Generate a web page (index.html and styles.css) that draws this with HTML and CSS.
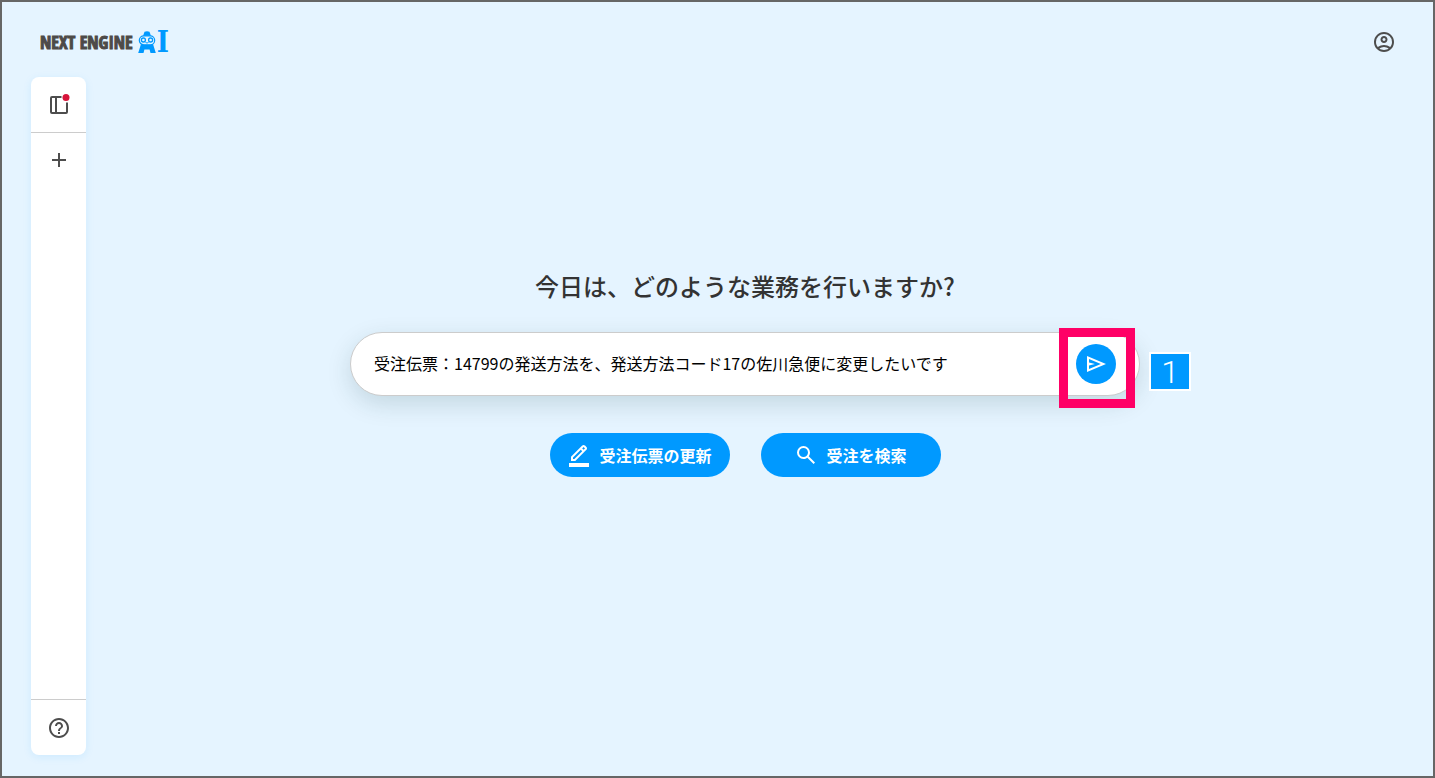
FILE: index.html
```html
<!DOCTYPE html>
<html lang="ja">

<head>
  <meta charset="UTF-8">
  <meta name="viewport" content="width=device-width, initial-scale=1.0">
  <title>NEXT ENGINE AI</title>
  <link rel="stylesheet" href="styles.css">
</head>

<body>
  <header class="header">
    <a class="logo" href="#">
      <span class="logo-name">NEXT ENGINE</span>
      <svg class="logo-robot" viewBox="0 0 18 22" aria-hidden="true">
        <path fill="#0099ff" d="M5 5L6.500 .8Q9 -.4 11.500 .8L13 5z" />
        <path fill="#0099ff" d="M3 13h12L17.800 22h-5.300l-.9-3.500H6.400L5.500 22H.2z" />
        <rect x="1.300" y="4.800" width="15.400" height="9" rx="4.500" fill="#e5f4ff" stroke="#0099ff" stroke-width="1.200" />
        <circle cx="5.400" cy="9" r="2" fill="none" stroke="#0099ff" stroke-width="1.300" />
        <circle cx="12.600" cy="9" r="2" fill="none" stroke="#0099ff" stroke-width="1.300" />
        <path fill="none" stroke="#0099ff" d="M7.500 11.500q1.500 1 3 0" />
      </svg>
      <span class="logo-letter">I</span>
    </a>
    <button class="icon-button" type="button" aria-label="アカウント">
      <svg viewBox="0 0 24 24" width="24" height="24">
        <path d="M5.850 17.100q1.275-.975 2.850-1.538T12 15q1.725 0 3.300.563t2.850 1.537q.875-1.025 1.363-2.325T20 12q0-3.325-2.338-5.663T12 4 6.337 6.337 4 12q0 1.475.488 2.775T5.850 17.100M12 13q-1.475 0-2.488-1.012T8.500 9.500t1.012-2.488T12 6t2.488 1.012T15.500 9.500t-1.012 2.488T12 13m0 9q-2.075 0-3.900-.788t-3.175-2.137T2.788 15.900 2 12t.788-3.900 2.137-3.175T8.100 2.788 12 2t3.900.788 3.175 2.137T21.213 8.100 22 12t-.788 3.900-2.137 3.175-3.175 2.138T12 22m0-2q1.325 0 2.500-.387t2.150-1.113q-.975-.725-2.150-1.112T12 17t-2.500.388T7.350 18.500q.975.725 2.150 1.113T12 20m0-9q.65 0 1.075-.425T13.500 9.500t-.425-1.075T12 8t-1.075.425T10.500 9.500t.425 1.075T12 11" />
      </svg>
    </button>
  </header>

  <div class="layout">
    <nav class="sidebar">
      <div class="sidebar-item">
        <button class="icon-button" type="button" aria-label="サイドバーを開く">
          <svg class="icon-panel" viewBox="0 0 24 24" width="24" height="24">
            <path d="M14.500 4H5a1 1 0 0 0-1 1v14a1 1 0 0 0 1 1h14a1 1 0 0 0 1-1V9.500M9 4v16" />
            <circle cx="19" cy="4.500" r="3.500" />
          </svg>
        </button>
      </div>
      <div class="sidebar-item sidebar-new">
        <button class="icon-button" type="button" aria-label="新しいチャット">
          <svg viewBox="0 0 24 24" width="24" height="24">
            <path d="M11 13H5v-2h6V5h2v6h6v2h-6v6h-2z" />
          </svg>
        </button>
      </div>
      <div class="sidebar-item">
        <button class="icon-button" type="button" aria-label="ヘルプ">
          <svg viewBox="0 0 24 24" width="24" height="24">
            <path d="M11 18h2v-2h-2zm1-16C6.480 2 2 6.480 2 12s4.480 10 10 10 10-4.480 10-10S17.520 2 12 2m0 18c-4.410 0-8-3.590-8-8s3.590-8 8-8 8 3.590 8 8-3.590 8-8 8m0-14c-2.210 0-4 1.790-4 4h2c0-1.100.9-2 2-2s2 .9 2 2c0 2-3 1.750-3 5h2c0-2.250 3-2.500 3-5 0-2.210-1.790-4-4-4" />
          </svg>
        </button>
      </div>
    </nav>

    <main class="main">
      <h1 class="title">今日は、どのような業務を行いますか?</h1>

      <form class="chat-form">
        <input class="chat-input" type="text" aria-label="メッセージ" value="受注伝票：14799の発送方法を、発送方法コード17の佐川急便に変更したいです">
        <div class="send">
          <button class="send-button" type="button" aria-label="送信">
            <svg viewBox="0 0 24 24" width="24" height="24">
              <path d="M3 20V4l19 8zm2-3 11.850-5L5 7v3.500l6 1.500-6 1.500z" />
            </svg>
          </button>
          <!-- 手順の強調枠と番号 -->
          <div class="highlight"></div>
          <div class="step">1</div>
        </div>
      </form>

      <div class="actions">
        <button class="action" type="button">
          <svg viewBox="0 0 24 24" width="24" height="24">
            <path d="M2 24v-4h20v4zm2-6v-4.250L15.200 2.575q.275-.275.638-.425T16.600 2t.775.150.675.450L19.425 4q.3.275.438.650T20 5.425q0 .375-.137.738t-.438.662L8.250 18zm2-2h1.400l7.800-7.775-1.400-1.425L6 14.600zM16.600 6.800 18 5.425 16.575 4 15.200 5.400z" />
          </svg>
          受注伝票の更新
        </button>
        <button class="action" type="button">
          <svg viewBox="0 0 24 24" width="24" height="24">
            <path d="m19.600 21-6.300-6.300q-.75.6-1.725.95T9.500 16q-2.725 0-4.612-1.888T3 9.500t1.888-4.612T9.500 3t4.613 1.888T16 9.500q0 1.100-.35 2.075T14.700 13.300l6.300 6.300zM9.500 14q1.875 0 3.188-1.312T14 9.500t-1.312-3.187T9.500 5 6.313 6.313 5 9.500t1.313 3.188T9.500 14" />
          </svg>
          受注を検索
        </button>
      </div>
    </main>
  </div>
</body>

</html>
```
FILE: styles.css
```css
* {
  box-sizing: border-box;
}

body {
  display: flex;
  flex-direction: column;
  min-height: 100vh;
  margin: 0;
  border: 2px solid #666;
  background-color: #e5f4ff;
  color: #333;
  font-family: "Noto Sans CJK JP", sans-serif;
}

button {
  border: none;
  padding: 0;
  font-family: inherit;
  cursor: pointer;
}

svg {
  display: block;
  fill: currentColor;
}

.header {
  display: flex;
  align-items: center;
  justify-content: space-between;
  height: 75px;
  padding: 4px 37px 0 38px;
}

.logo {
  display: flex;
  align-items: center;
  height: 24px;
  color: #4d4a48;
  text-decoration: none;
}

.logo-name {
  margin-right: 5px;
  font-family: "Liberation Sans Narrow", "Open Sans Condensed", "Liberation Sans", sans-serif;
  font-size: 18px;
  font-weight: bold;
  -webkit-text-stroke: 1px #4d4a48;
}

.logo-robot {
  width: 18px;
  height: 22px;
}

.logo-letter {
  margin-left: 1px;
  color: #09f;
  font-family: "DejaVu Serif Condensed", "DejaVu Serif", serif;
  font-size: 29px;
  font-weight: bold;
  line-height: 22px;
}

.icon-button {
  background: none;
  color: #4d4d4d;
}

.icon-panel path {
  fill: none;
  stroke: #4d4d4d;
  stroke-width: 2px;
}

.icon-panel circle {
  fill: #d7143a;
}

.layout {
  display: flex;
  flex: 1;
  padding: 0 29px 21px;
}

.sidebar {
  display: flex;
  flex-direction: column;
  width: 55px;
  border-radius: 8px;
  background-color: #fff;
  box-shadow: 0 2px 8px rgba(0, 153, 255, 0.1);
}

.sidebar-item {
  display: flex;
  align-items: center;
  justify-content: center;
  height: 55px;
}

.sidebar-new {
  flex: 1;
  align-items: flex-start;
  padding-top: 15px;
  border-top: 1px solid #ccc;
  border-bottom: 1px solid #ccc;
}

.main {
  display: flex;
  flex: 1;
  flex-direction: column;
  align-items: center;
  justify-content: center;
  padding-bottom: 88px;
}

.title {
  margin: 0 0 28px;
  font-size: 24px;
  font-weight: 500;
  line-height: 36px;
}

.chat-form {
  display: flex;
  align-items: center;
  width: 100%;
  max-width: 790px;
  height: 64px;
  margin-bottom: 37px;
  padding: 0 23px;
  border: 1px solid #ccc;
  border-radius: 32px;
  background-color: #fff;
  box-shadow: 0 8px 24px rgba(0, 51, 51, 0.15);
}

.chat-input {
  flex: 1;
  min-width: 0;
  padding: 0 0 2px;
  border: none;
  outline: none;
  background: none;
  color: #000;
  font-family: inherit;
  font-size: 16px;
}

.send {
  position: relative;
}

.send-button {
  display: flex;
  align-items: center;
  justify-content: center;
  width: 40px;
  height: 40px;
  border-radius: 50%;
  background-color: #09f;
  color: #fff;
}

.highlight {
  position: absolute;
  top: -16px;
  left: -17px;
  width: 76px;
  height: 80px;
  border: 9px solid #f06;
  pointer-events: none;
}

.step {
  position: absolute;
  top: 8px;
  left: 73px;
  width: 42px;
  height: 39px;
  border: 2px solid #fff;
  background-color: #09f;
  color: #fff;
  font-family: Roboto, sans-serif;
  font-size: 32px;
  font-weight: 300;
  line-height: 36px;
  text-align: center;
}

.actions {
  display: flex;
  gap: 31px;
}

.action {
  display: flex;
  align-items: center;
  justify-content: center;
  gap: 8px;
  width: 180px;
  height: 44px;
  border-radius: 22px;
  background-color: #09f;
  color: #fff;
  font-size: 16px;
  font-weight: bold;
  line-height: 24px;
}
```
